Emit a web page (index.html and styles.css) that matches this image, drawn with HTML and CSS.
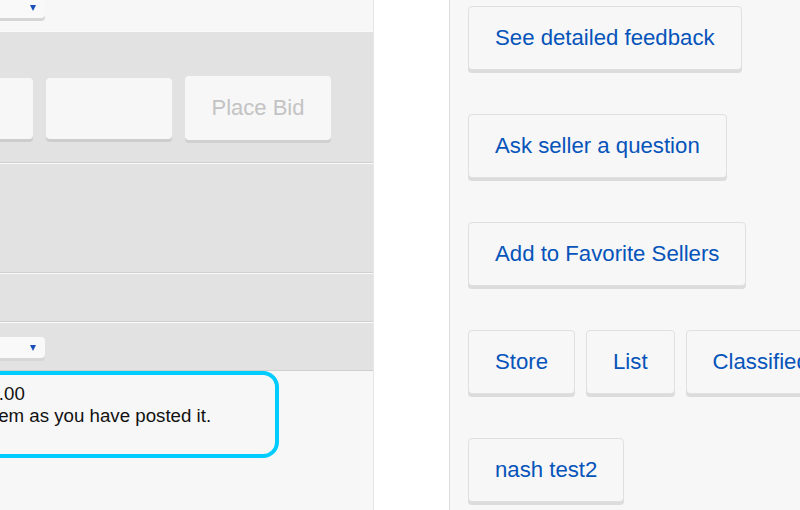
FILE: index.html
```html
<!DOCTYPE html>
<html lang="en">
<head>
  <meta charset="UTF-8">
  <meta name="viewport" content="width=device-width, initial-scale=1.0">
  <title>Item - bidding</title>
  <link rel="stylesheet" href="styles.css">
</head>
<body>
  <div class="page">
    <div class="bid-panel">
      <div class="filters">
        <div class="dropdown dropdown-top"><span class="caret"></span></div>
      </div>
      <div class="band band-bid">
        <div class="bid-row">
          <div class="field field-qty"></div>
          <div class="field field-amount"></div>
          <button class="place-bid" disabled>Place Bid</button>
        </div>
      </div>
      <div class="band band-empty"></div>
      <div class="band band-thin"></div>
      <div class="band band-thin">
        <div class="dropdown dropdown-ship"><span class="caret"></span></div>
      </div>
      <div class="notice-area">
        <div class="notice">
          <div class="notice-line">Enter the minimum bid of US $2.00</div>
          <div class="notice-line">You are committing to buy this item as you have posted it.</div>
        </div>
      </div>
    </div>

    <div class="gutter"></div>

    <div class="seller-panel">
      <div class="action-row">
        <a class="action-btn" href="#">See detailed feedback</a>
      </div>
      <div class="action-row">
        <a class="action-btn" href="#">Ask seller a question</a>
      </div>
      <div class="action-row">
        <a class="action-btn" href="#">Add to Favorite Sellers</a>
      </div>
      <div class="action-row">
        <a class="action-btn" href="#">Store</a>
        <a class="action-btn" href="#">List</a>
        <a class="action-btn" href="#">Classifieds</a>
      </div>
      <div class="action-row">
        <a class="action-btn" href="#">nash test2</a>
      </div>
    </div>
  </div>
</body>
</html>
```

FILE: styles.css
```css
* {
  margin: 0;
  padding: 0;
  box-sizing: border-box;
}

body {
  font-family: 'Liberation Sans', Arial, sans-serif;
  background-color: #fff;
  color: #111;
  overflow: hidden;
}

.page {
  display: flex;
  height: 510px;
  overflow: hidden;
}

/* left column: bidding form */
.bid-panel {
  width: 374px;
  flex-shrink: 0;
  display: flex;
  flex-direction: column;
  border-right: 1px solid #e6e6e6;
  overflow: hidden;
}
.filters {
  height: 31px;
  background: #f7f7f7;
}
.band {
  background: #e2e2e2;
  border-top: 1px solid #fafafa;
  border-bottom: 1px solid #cfcfcf;
}
.band-bid {
  height: 132px;
  padding-top: 44px;
}
.band-empty {
  height: 110px;
}
.band-thin {
  height: 49px;
}
.bid-row {
  display: flex;
  align-items: center;
  gap: 13px;
  height: 64px;
}
.field {
  height: 61px;
  background: #f7f7f7;
  border-radius: 4px;
  box-shadow: 0 3px 0 #cdcdcd;
  flex-shrink: 0;
}
.field-qty {
  width: 80px;
  margin-left: -47px;
}
.field-amount {
  width: 126px;
}
.place-bid {
  width: 146px;
  height: 64px;
  flex-shrink: 0;
  border: none;
  border-radius: 4px;
  background: #f7f7f7;
  box-shadow: 0 3px 0 #d0d0d0;
  color: #c3c3c3;
  font-family: inherit;
  font-size: 22px;
}

.dropdown {
  width: 80px;
  height: 21px;
  margin-left: -35px;
  display: flex;
  align-items: center;
  justify-content: flex-end;
  padding-right: 9px;
  background: #f9f9f9;
  border-radius: 4px;
  box-shadow: 0 3px 0 #d6d6d6;
}
.dropdown-top {
  margin-top: -3px;
}
.dropdown-ship {
  margin-top: 14px;
}
.caret {
  width: 0;
  height: 0;
  border-left: 3.5px solid transparent;
  border-right: 3.5px solid transparent;
  border-top: 6px solid #1a4fbb;
}

.notice-area {
  flex: 1;
  background: #f7f7f7;
}
.notice {
  width: 561px;
  margin-left: -282px;
  padding: 8px 12px 27px 12px;
  border: 4px solid #00ccff;
  border-radius: 16px;
  font-size: 18.7px;
  line-height: 22px;
  white-space: nowrap;
}

.gutter {
  width: 75px;
  flex-shrink: 0;
  background: #fff;
}

/* right column: seller actions */
.seller-panel {
  flex: 1;
  background: #f7f7f7;
  border-left: 1px solid #dedede;
  padding: 6px 0 0 18px;
  display: flex;
  flex-direction: column;
  gap: 44px;
  overflow: hidden;
}
.action-row {
  display: flex;
  gap: 11px;
  flex-wrap: nowrap;
}
.action-btn {
  display: block;
  flex-shrink: 0;
  height: 64px;
  line-height: 62px;
  padding: 0 26px;
  border: 1px solid #e0e0e0;
  border-radius: 4px;
  background: #f7f7f7;
  box-shadow: 0 3px 0 #dcdcdc;
  color: #0654ba;
  font-size: 22.2px;
  text-decoration: none;
  white-space: nowrap;
}
```
